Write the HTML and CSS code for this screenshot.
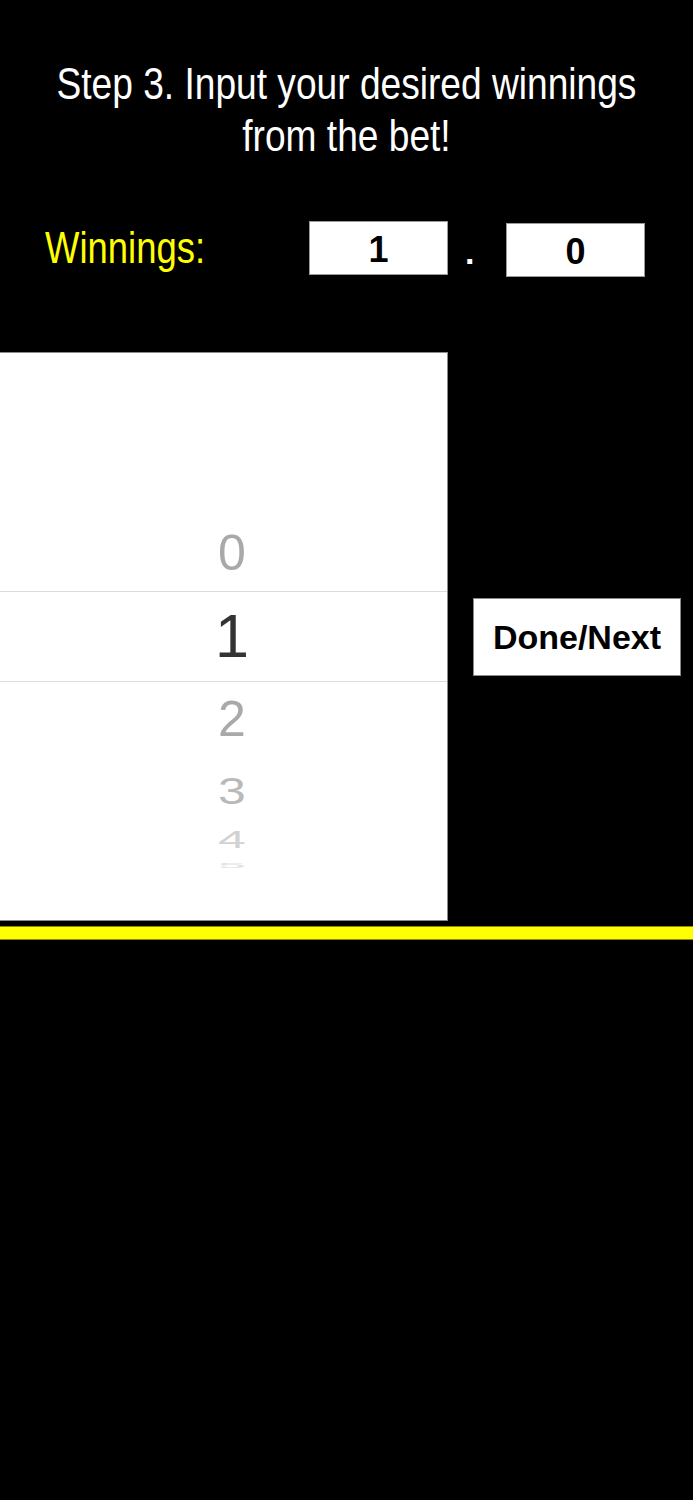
FILE: index.html
```html
<!DOCTYPE html>
<html lang="en">
<head>
<meta charset="utf-8">
<title>Step 3</title>
<link rel="stylesheet" href="styles.css">
</head>
<body>
  <main class="screen">
    <h1 class="title"><span class="title-text">Step 3. Input your desired winnings<br>from the bet!</span></h1>

    <div class="winnings-row">
      <div class="label"><span class="label-text">Winnings:</span></div>
      <div class="field">1</div>
      <div class="dot">.</div>
      <div class="field field-second">0</div>
    </div>

    <div class="picker-row">
      <div class="picker">
        <div class="wheel">
          <div class="row row-0"><span class="digit d-near">0</span></div>
          <div class="row band"><span class="digit d-sel">1</span></div>
          <div class="row row-2"><span class="digit d-near">2</span></div>
          <div class="row row-3"><span class="digit d-3">3</span></div>
          <div class="row row-4"><span class="digit d-4">4</span></div>
          <div class="row row-5"><span class="digit d-5">5</span></div>
        </div>
      </div>
      <button class="next-btn" type="button">Done/Next</button>
    </div>

    <div class="yellow-bar"></div>
  </main>
</body>
</html>
```

FILE: styles.css
```css
html, body {
  margin: 0;
  padding: 0;
  background: #000;
}

body {
  width: 693px;
  min-height: 1500px;
  font-family: "Liberation Sans", Arial, sans-serif;
  color: #fff;
}

.screen {
  display: flex;
  flex-direction: column;
}

.title {
  display: flex;
  justify-content: center;
  margin: 58px 0 0 0;
  font-size: 45px;
  font-weight: normal;
  line-height: 52px;
  text-align: center;
  white-space: nowrap;
}

.title-text {
  display: block;
  flex: none;
  transform: scaleX(0.825);
  transform-origin: center;
}

.winnings-row {
  display: flex;
  align-items: flex-start;
  margin-top: 59px;
  padding-left: 45px;
  height: 56px;
}

.label {
  width: 264px;
  height: 54px;
  font-size: 45px;
  line-height: 54px;
  color: #ffff00;
  white-space: nowrap;
}

.label-text {
  display: inline-block;
  transform: scaleX(0.81);
  transform-origin: left center;
}

.field {
  box-sizing: border-box;
  width: 139px;
  height: 54px;
  background: #fff;
  border: 1px solid #9a9a9a;
  color: #000;
  font-weight: bold;
  font-size: 36px;
  line-height: 48px;
  padding-top: 4px;
  text-align: center;
}

.field-second {
  margin-top: 2px;
}

.dot {
  width: 58px;
  box-sizing: border-box;
  padding-left: 17px;
  margin-top: 4px;
  font-weight: bold;
  font-size: 34px;
  line-height: 54px;
  color: #fff;
}

.picker-row {
  display: flex;
  align-items: center;
  margin-top: 75px;
}

.picker {
  box-sizing: border-box;
  width: 448px;
  height: 569px;
  background: #fff;
  border-top: 1px solid #8a8a8a;
  border-right: 1px solid #8a8a8a;
  border-bottom: 1px solid #8a8a8a;
  overflow: hidden;
}

.wheel {
  display: flex;
  flex-direction: column;
  padding-top: 162px;
}

.row {
  display: flex;
  align-items: center;
  justify-content: center;
  padding-left: 17px;
  box-sizing: border-box;
}

.row-0 { height: 76px; }
.band {
  height: 91px;
  border-top: 1px solid #dcdcdc;
  border-bottom: 1px solid #dcdcdc;
}
.row-2 { height: 74px; }
.row-3 { height: 70px; }
.row-4 { height: 28px; }
.row-5 { height: 22px; }

.digit {
  display: inline-block;
  line-height: 1;
  font-family: "Liberation Sans", Arial, sans-serif;
  font-weight: normal;
}

.d-sel {
  font-size: 61px;
  color: #333;
}

.d-near {
  font-size: 50px;
  color: #a9a9a9;
}

.d-3 {
  font-size: 50px;
  color: #b9b9b9;
  transform: scaleY(0.75);
}

.d-4 {
  font-size: 50px;
  color: #d2d2d2;
  transform: scaleY(0.47);
}

.d-5 {
  font-size: 50px;
  color: #e2e2e2;
  transform: scaleY(0.15);
}

.next-btn {
  box-sizing: border-box;
  margin: 0 0 0 25px;
  width: 208px;
  height: 78px;
  padding: 0;
  background: #fff;
  border: 1px solid #8a8a8a;
  border-radius: 0;
  color: #000;
  font-family: "Liberation Sans", Arial, sans-serif;
  font-weight: bold;
  font-size: 34px;
  line-height: 1;
}

.yellow-bar {
  box-sizing: border-box;
  margin-top: 5px;
  height: 14px;
  background: #ffff00;
  border-top: 1px solid #8c8c00;
  border-bottom: 1px solid #8c8c00;
}
```
